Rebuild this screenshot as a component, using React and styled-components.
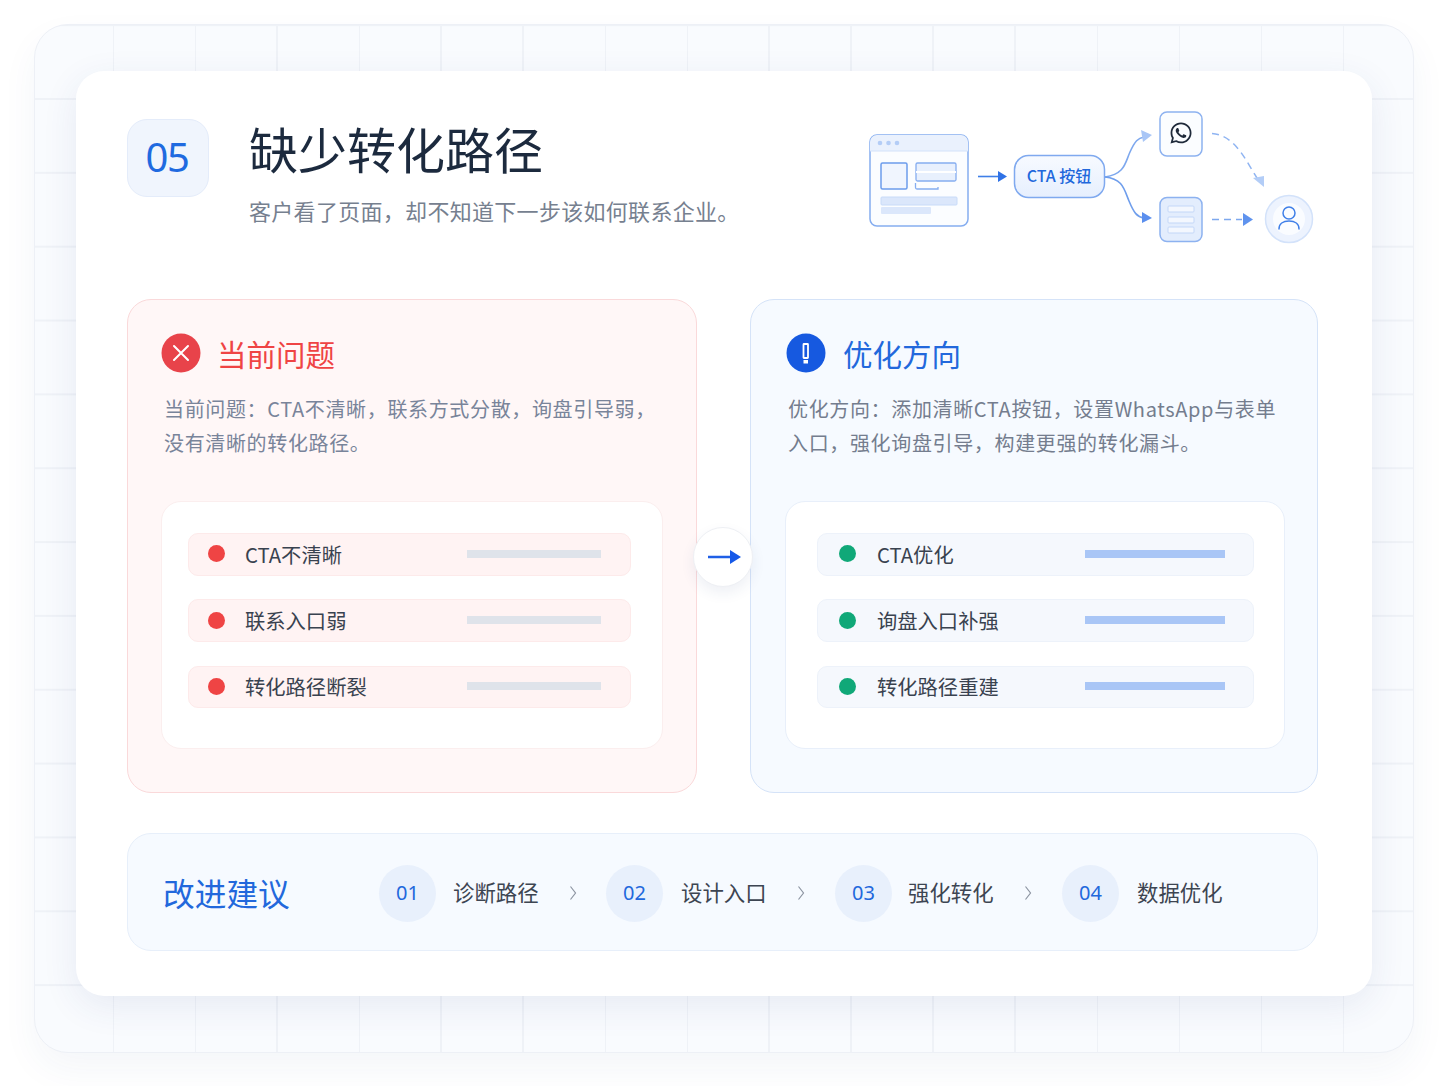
import React from "react"
import styled, { createGlobalStyle } from "styled-components"
import { FaWhatsapp } from "react-icons/fa"

const GlobalStyle = createGlobalStyle`
  html, body {
    margin: 0;
    padding: 0;
    background: #ffffff;
    font-family: "Noto Sans CJK SC", "Noto Sans", sans-serif;
  }
  * { box-sizing: border-box; }
`

const tones = {
  red: {
    panelBg: "#fff7f7",
    panelBorder: "#fad9da",
    title: "#ef4444",
    innerBorder: "#fbeeee",
    rowBg: "#fff3f3",
    rowBorder: "#fdeaea",
    dot: "#ef4444",
    bar: "#dfe3ea",
    barWidth: 134,
    barRight: 29,
    cardWidth: 502,
    cardLeft: 0,
    descLeft: 3,
    rowMargin: 26,
    rowRight: 31,
    rowLeft: 19,
    dotGap: 20,
    headMargin: 0,
    headGap: 16,
    descColor: "#79849a",
  },
  blue: {
    panelBg: "#f6faff",
    panelBorder: "#d5e3f8",
    title: "#2268dc",
    innerBorder: "#e8effa",
    rowBg: "#f5f8fd",
    rowBorder: "#edf2fa",
    dot: "#10a878",
    bar: "#a9c6f6",
    barWidth: 140,
    barRight: 28,
    cardWidth: 500,
    cardLeft: 1,
    descLeft: 4,
    rowMargin: 31,
    rowRight: 30,
    rowLeft: 21,
    dotGap: 21,
    headMargin: 2,
    headGap: 17,
    descColor: "#747d8e",
  },
}

const Page = styled.div`
  width: 1448px;
  height: 1086px;
  padding: 24px 34px 33px;
  overflow: hidden;
`

const Backdrop = styled.div`
  width: 1380px;
  height: 1029px;
  padding: 46px 42px 0 41px;
  border: 1px solid #edf0f6;
  border-radius: 34px;
  background-color: #f9fbfe;
  background-image:
    linear-gradient(to right, #eff2f7 1.5px, transparent 1.5px),
    linear-gradient(to bottom, #eff2f7 1.5px, transparent 1.5px);
  background-size: 82px 73.85px;
  background-position: 77px 73px;
  box-shadow: 0 16px 36px rgba(40, 70, 130, 0.05);
`

const Sheet = styled.main`
  position: relative;
  width: 1296px;
  height: 925px;
  padding: 48px 54px 0 51px;
  border-radius: 28px;
  background: #ffffff;
  box-shadow: 0 10px 36px rgba(40, 70, 130, 0.09);
`

const Header = styled.header`
  display: flex;
  align-items: flex-start;
  height: 180px;
`

const Badge = styled.div`
  display: flex;
  align-items: center;
  justify-content: center;
  flex: none;
  width: 82px;
  height: 78px;
  padding: 0 2px 3px 0;
  border: 1px solid #e4ecfa;
  border-radius: 20px;
  background: #f0f5fd;
  color: #1f6ae0;
  font-family: "Noto Sans", sans-serif;
  font-size: 40px;
  letter-spacing: -1.5px;
`

const Heading = styled.div`
  margin-left: 40px;
`

const Title = styled.h1`
  margin: -7px 0 0;
  color: #1c2a3e;
  font-size: 49px;
  font-weight: 400;
  line-height: 72px;
`

const Subtitle = styled.p`
  margin: 10px 0 0;
  color: #76808f;
  font-size: 22px;
  letter-spacing: 0.3px;
  line-height: 32px;
`

const Flow = styled.svg`
  flex: none;
  margin: -11px 0 0 auto;
  overflow: visible;
`

const FlowLabel = styled.text`
  fill: #2268dc;
  font-family: "Noto Sans CJK SC", "Noto Sans", sans-serif;
  font-size: 16px;
  font-weight: 500;
  text-anchor: middle;
`

const Compare = styled.section`
  position: relative;
  display: grid;
  grid-template-columns: 570px 568px;
  justify-content: space-between;
  height: 494px;
`

const Panel = styled.article`
  padding: 33px 33px 0;
  border: 1px solid ${(props) => tones[props.$tone].panelBorder};
  border-radius: 24px;
  background: ${(props) => tones[props.$tone].panelBg};
`

const PanelHead = styled.div`
  display: flex;
  align-items: center;
  gap: ${(props) => tones[props.$tone].headGap}px;
  margin-left: ${(props) => tones[props.$tone].headMargin}px;
  height: 40px;

  h2 {
    margin: 0;
    color: ${(props) => tones[props.$tone].title};
    font-size: 29.5px;
    font-weight: 400;
    line-height: 40px;
  }
`

const StatusIcon = styled.svg`
  flex: none;
  display: block;
`

const Desc = styled.p`
  margin: 19px 0 0 ${(props) => tones[props.$tone].descLeft}px;
  width: 495px;
  color: ${(props) => tones[props.$tone].descColor};
  font-size: 20px;
  letter-spacing: 0.65px;
  line-height: 33.5px;
`

const ListCard = styled.ul`
  display: flex;
  flex-direction: column;
  gap: 23.8px;
  width: ${(props) => tones[props.$tone].cardWidth}px;
  height: 248px;
  margin: 42px 0 0 ${(props) => tones[props.$tone].cardLeft}px;
  padding: 31px ${(props) => tones[props.$tone].rowRight}px 0 ${(props) => tones[props.$tone].rowMargin}px;
  border: 1px solid ${(props) => tones[props.$tone].innerBorder};
  border-radius: 20px;
  background: #ffffff;
  list-style: none;
`

const Row = styled.li`
  display: flex;
  align-items: center;
  height: 42.5px;
  padding: 0 ${(props) => tones[props.$tone].barRight}px 1px ${(props) => tones[props.$tone].rowLeft}px;
  border: 1px solid ${(props) => tones[props.$tone].rowBorder};
  border-radius: 10px;
  background: ${(props) => tones[props.$tone].rowBg};
  color: #39424f;
  font-size: 20.3px;
`

const Dot = styled.span`
  flex: none;
  width: 17px;
  height: 17px;
  margin-right: ${(props) => tones[props.$tone].dotGap}px;
  border-radius: 50%;
  background: ${(props) => tones[props.$tone].dot};
`

const Bar = styled.span`
  flex: none;
  width: ${(props) => tones[props.$tone].barWidth}px;
  height: 8px;
  margin-left: auto;
  background: ${(props) => tones[props.$tone].bar};
`

const Bridge = styled.div`
  position: absolute;
  left: 566px;
  top: 228px;
  display: flex;
  align-items: center;
  justify-content: center;
  width: 60px;
  height: 60px;
  padding-left: 2px;
  border: 1px solid #eef0f4;
  border-radius: 50%;
  background: #ffffff;
  box-shadow: 0 6px 14px rgba(40, 70, 130, 0.08);
`

const Advice = styled.section`
  display: flex;
  align-items: center;
  height: 118px;
  margin-top: 40px;
  padding: 2px 0 0 35px;
  border: 1px solid #e7effa;
  border-radius: 24px;
  background: #f6faff;
`

const AdviceTitle = styled.h3`
  flex: none;
  width: 216px;
  margin: 0 0 3px;
  color: #2268dc;
  font-size: 31.7px;
  font-weight: 400;
`

const Step = styled.div`
  display: flex;
  align-items: center;
  flex: none;
  width: ${(props) => props.$width}px;
`

const StepNo = styled.span`
  display: flex;
  align-items: center;
  justify-content: center;
  flex: none;
  width: 57px;
  height: 57px;
  padding-bottom: 2px;
  border-radius: 50%;
  background: #e8f0fc;
  color: #2268dc;
  font-family: "Noto Sans", sans-serif;
  font-size: 20px;
`

const StepName = styled.span`
  margin: 0 0 3px ${(props) => props.$gap}px;
  color: #3d4552;
  font-size: 21.4px;
`

const Chevron = styled.svg`
  flex: none;
  margin-left: 30px;
`

const problems = ["CTA不清晰", "联系入口弱", "转化路径断裂"]
const fixes = ["CTA优化", "询盘入口补强", "转化路径重建"]
const steps = [
  { no: "01", name: "诊断路径", width: 227, gap: 17 },
  { no: "02", name: "设计入口", width: 229, gap: 18 },
  { no: "03", name: "强化转化", width: 227, gap: 16 },
  { no: "04", name: "数据优化", width: 180, gap: 18 },
]

function FlowDiagram() {
  return (
    <Flow width="450" height="137" viewBox="18 18 450 137" fill="none">
      <defs>
        <linearGradient id="ctaFill" x1="0" y1="0" x2="0" y2="1">
          <stop offset="0" stopColor="#f7faff" />
          <stop offset="1" stopColor="#e6effe" />
        </linearGradient>
      </defs>

      <rect x="20" y="45" width="98" height="91" rx="7" fill="#fbfdff" stroke="#85adf0" strokeWidth="1.5" />
      <path d="M20 61V52a7 7 0 0 1 7-7h84a7 7 0 0 1 7 7v9z" fill="#eaf1fd" />
      <path d="M20 61h98" stroke="#d3e2fa" strokeWidth="1" />
      <circle cx="30" cy="53" r="2.3" fill="#b4cdf6" />
      <circle cx="38.5" cy="53" r="2.3" fill="#b4cdf6" />
      <circle cx="47" cy="53" r="2.3" fill="#b4cdf6" />
      <rect x="31" y="73" width="26" height="26" rx="1.5" fill="#f0f5fe" stroke="#6c9cec" strokeWidth="1.5" />
      <rect x="66" y="73" width="40" height="18" rx="1.5" fill="#e8f0fd" stroke="#85adf0" strokeWidth="1.3" />
      <path d="M66 82h40" stroke="#ffffff" strokeWidth="2" />
      <path d="M88 97v2H67a1.5 1.5 0 0 1-1.500-1.500V93" stroke="#85adf0" strokeWidth="1.3" />
      <rect x="31" y="107" width="76" height="8" rx="1" fill="#dbe7fb" stroke="#c8dbf8" />
      <rect x="31" y="117" width="50" height="7" rx="1" fill="#dbe7fb" />

      <path d="M128 86.500h21" stroke="#3f7fe8" strokeWidth="1.6" />
      <path d="M148 81l9 5.500-9 5.500z" fill="#2f72e6" />

      <rect x="164.500" y="65.500" width="90" height="42" rx="14" fill="url(#ctaFill)" stroke="#7fa9ef" strokeWidth="1.5" />
      <FlowLabel x="209" y="92">CTA 按钮</FlowLabel>

      <path d="M255 87c20-3 20-14 25-25s8-14 14-15" stroke="#7ea8ee" strokeWidth="1.6" />
      <path d="M291 40l11 5-9 7z" fill="#a9c6f6" />
      <path d="M255 87c18 2 19 12 24 24s8 16 15 17" stroke="#6f9eec" strokeWidth="1.6" />
      <path d="M292 122l10 6-10 5z" fill="#5b8fee" />

      <rect x="310" y="22" width="42" height="44" rx="7" fill="#fbfdff" stroke="#8db2f0" strokeWidth="1.5" />
      <FaWhatsapp x="319" y="31" size={24} color="#1f2a3a" />

      <rect x="310" y="107.500" width="42" height="44" rx="7" fill="#e3edfd" stroke="#8db2f0" strokeWidth="1.5" />
      <rect x="318" y="116" width="26" height="6" rx="1" fill="#f3f7fe" stroke="#c3d7f8" />
      <rect x="318" y="127" width="26" height="6" rx="1" fill="#f3f7fe" stroke="#c3d7f8" />
      <rect x="318" y="137" width="26" height="6" rx="1" fill="#f3f7fe" stroke="#c3d7f8" />

      <path d="M362 43.500c24 2 34 28 46 46" stroke="#8fb4f2" strokeWidth="1.5" strokeDasharray="7 5" />
      <path d="M403 88l11-2 0 11z" fill="#b3cdf7" />
      <path d="M362 129.500h30" stroke="#7ea8ee" strokeWidth="1.5" strokeDasharray="7 5" />
      <path d="M393 123l10 6.500-10 6.500z" fill="#5f93ee" />

      <circle cx="439" cy="129" r="23.500" fill="#edf3fe" stroke="#d3e2fa" strokeWidth="1.5" />
      <circle cx="439" cy="129" r="16" fill="#fafcff" />
      <circle cx="439" cy="123" r="6" fill="none" stroke="#3f7fe8" strokeWidth="1.5" />
      <path d="M429 139c0-5 4-8 10-8s10 3 10 8" stroke="#3f7fe8" strokeWidth="1.5" strokeLinecap="round" />
    </Flow>
  )
}

function ProblemIcon() {
  return (
    <StatusIcon width="40" height="40" viewBox="0 0 40 40">
      <circle cx="20" cy="20" r="19.500" fill="#e8434a" />
      <path d="M13 13l14 14M27 13L13 27" stroke="#ffffff" strokeWidth="2" strokeLinecap="round" />
    </StatusIcon>
  )
}

function FixIcon() {
  return (
    <StatusIcon width="40" height="40" viewBox="0 0 40 40">
      <circle cx="20" cy="20" r="19.500" fill="#1659e0" />
      <rect x="17.500" y="11" width="4.500" height="14" rx="0.5" fill="none" stroke="#ffffff" strokeWidth="1.800" />
      <rect x="17.500" y="27" width="4.500" height="3.500" fill="#ffffff" />
    </StatusIcon>
  )
}

function StatusPanel({ tone, icon, title, desc, items }) {
  return (
    <Panel $tone={tone}>
      <PanelHead $tone={tone}>
        {icon}
        <h2>{title}</h2>
      </PanelHead>
      <Desc $tone={tone}>{desc}</Desc>
      <ListCard $tone={tone}>
        {items.map((item) => (
          <Row $tone={tone} key={item}>
            <Dot $tone={tone} />
            {item}
            <Bar $tone={tone} />
          </Row>
        ))}
      </ListCard>
    </Panel>
  )
}

export default function App() {
  return (
    <Page>
      <GlobalStyle />
      <Backdrop>
        <Sheet>
          <Header>
            <Badge>05</Badge>
            <Heading>
              <Title>缺少转化路径</Title>
              <Subtitle>{"客户看了页面\uFF0C却不知道下一步该如何联系企业。"}</Subtitle>
            </Heading>
            <FlowDiagram />
          </Header>

          <Compare>
            <StatusPanel
              tone="red"
              icon={<ProblemIcon />}
              title="当前问题"
              desc={"当前问题\uFF1ACTA不清晰\uFF0C联系方式分散\uFF0C询盘引导弱\uFF0C没有清晰的转化路径。"}
              items={problems}
            />
            <StatusPanel
              tone="blue"
              icon={<FixIcon />}
              title="优化方向"
              desc={"优化方向\uFF1A添加清晰CTA按钮\uFF0C设置WhatsApp与表单入口\uFF0C强化询盘引导\uFF0C构建更强的转化漏斗。"}
              items={fixes}
            />
            <Bridge>
              <svg width="36" height="16" viewBox="0 0 36 16">
                <path d="M2 8h24" stroke="#1f5fe6" strokeWidth="2.500" />
                <path d="M24 1l11 7-11 7z" fill="#1659e8" />
              </svg>
            </Bridge>
          </Compare>

          <Advice>
            <AdviceTitle>改进建议</AdviceTitle>
            {steps.map((step, index) => (
              <Step key={step.no} $width={step.width}>
                <StepNo>{step.no}</StepNo>
                <StepName $gap={step.gap}>{step.name}</StepName>
                {index < steps.length - 1 && (
                  <Chevron width="8" height="16" viewBox="0 0 8 16" fill="none">
                    <path d="M1.500 1.500L6.500 8l-5 6.500" stroke="#8c94a1" strokeWidth="1.200" />
                  </Chevron>
                )}
              </Step>
            ))}
          </Advice>
        </Sheet>
      </Backdrop>
    </Page>
  )
}
